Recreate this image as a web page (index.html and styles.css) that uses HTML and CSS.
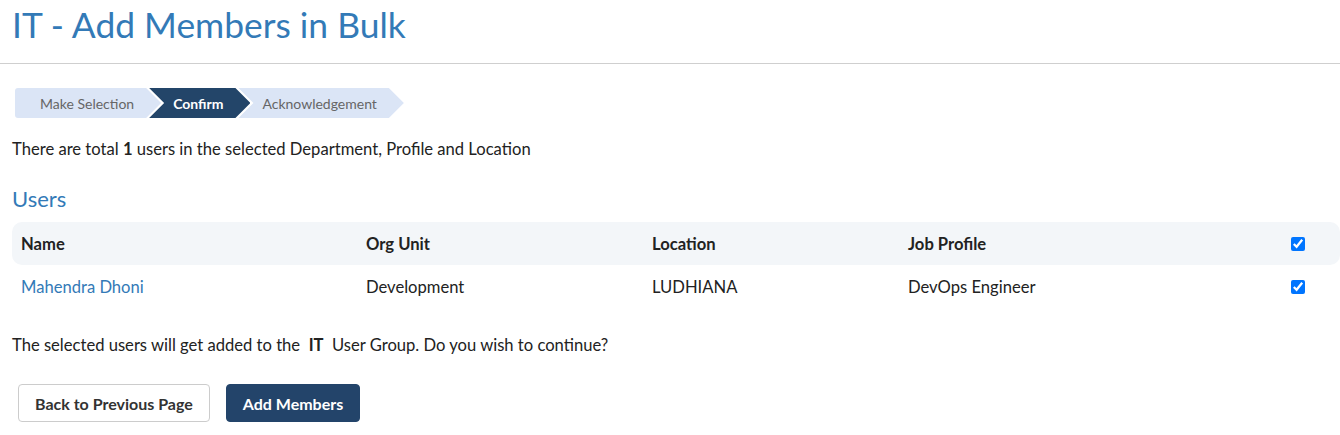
FILE: index.html
```html
<!DOCTYPE html>
<html lang="en">
<head>
<meta charset="utf-8">
<title>IT - Add Members in Bulk</title>
<link rel="stylesheet" href="styles.css">
</head>
<body>
<header class="page-header">
  <h1 class="page-title">IT - Add Members in Bulk</h1>
</header>
<main class="content">
  <nav class="steps">
    <span class="step step-first">Make Selection</span>
    <span class="step step-active">Confirm</span>
    <span class="step">Acknowledgement</span>
  </nav>
  <p class="summary">There are total <strong>1</strong> users in the selected Department, Profile and Location</p>
  <h2 class="section-title">Users</h2>
  <table class="users">
    <colgroup>
      <col class="c-name"><col class="c-org"><col class="c-loc"><col class="c-job"><col class="c-check">
    </colgroup>
    <thead>
      <tr>
        <th>Name</th>
        <th>Org Unit</th>
        <th>Location</th>
        <th>Job Profile</th>
        <th><input type="checkbox" class="check" checked></th>
      </tr>
    </thead>
    <tbody>
      <tr>
        <td><a href="#" class="user-link">Mahendra Dhoni</a></td>
        <td>Development</td>
        <td>LUDHIANA</td>
        <td>DevOps Engineer</td>
        <td><input type="checkbox" class="check" checked></td>
      </tr>
    </tbody>
  </table>
  <p class="confirm-text">The selected users will get added to the&nbsp; <strong class="group">IT</strong> &nbsp;User Group. Do you wish to continue?</p>
  <div class="actions">
    <button class="btn btn-default" type="button">Back to Previous Page</button>
    <button class="btn btn-primary" type="button">Add Members</button>
  </div>
</main>
</body>
</html>
```
FILE: styles.css
```css
* { box-sizing: border-box; }
html, body { margin: 0; padding: 0; background: #fff; }
body {
  font-family: Lato, "Open Sans", "Liberation Sans", sans-serif;
  font-size: 16.6px;
  color: #222;
}
.page-header {
  padding: 3px 12px 17px;
  border-bottom: 1px solid #cfcfcf;
}
.page-title {
  margin: 0;
  font-size: 35.4px;
  font-weight: 400;
  line-height: 43px;
  color: #337ab7;
}
.content { padding: 0 0 0 12px; }
.steps {
  display: flex;
  margin-top: 24px;
  margin-left: 3px;
  height: 30px;
}
.step {
  display: flex;
  align-items: center;
  height: 30px;
  padding: 0 27px 0 24px;
  font-size: 14px;
  color: #666;
  background: #dbe5f6;
  clip-path: polygon(0 0, calc(100% - 15px) 0, 100% 50%, calc(100% - 15px) 100%, 0 100%, 15px 50%);
  margin-left: -12px;
}
.step-first {
  margin-left: 0;
  padding-left: 25px;
  border-radius: 3px 0 0 3px;
  clip-path: polygon(0 0, calc(100% - 15px) 0, 100% 50%, calc(100% - 15px) 100%, 0 100%);
}
.step-active {
  background: #234569;
  color: #fff;
  font-weight: 700;
}
.summary {
  margin: 19px 0 0;
  line-height: 24px;
}
.section-title {
  margin: 25px 0 11px;
  font-size: 22px;
  font-weight: 400;
  line-height: 25px;
  color: #337ab7;
}
.users {
  width: 100%;
  table-layout: fixed;
  border-collapse: separate;
  border-spacing: 0;
}
.c-name { width: 345px; }
.c-org { width: 286px; }
.c-loc { width: 256px; }
.c-check { width: 58px; }
.users th, .users td {
  height: 43px;
  padding: 0 9px;
  text-align: left;
  vertical-align: middle;
}
.users th {
  background: #f3f6f9;
  font-weight: 700;
  color: #222;
}
.users th:first-child { border-radius: 10px 0 0 10px; }
.users th:last-child { border-radius: 0 10px 10px 0; }
.check {
  display: block;
  width: 14px;
  height: 14px;
  margin: 0;
}
.user-link {
  color: #337ab7;
  text-decoration: none;
}
.confirm-text {
  margin: 25px 0 0;
  line-height: 24px;
}
.group { font-weight: 700; }
.actions {
  display: flex;
  gap: 16px;
  margin: 27px 0 0 6px;
}
.btn {
  height: 38px;
  padding: 0 16px;
  border-radius: 4px;
  font-family: Lato, "Open Sans", "Liberation Sans", sans-serif;
  font-size: 16px;
  font-weight: 700;
  cursor: pointer;
}
.btn-default {
  background: #fff;
  color: #333;
  border: 1px solid #ccc;
}
.btn-primary {
  background: #23446a;
  color: #fff;
  border: 1px solid #23446a;
}
```
